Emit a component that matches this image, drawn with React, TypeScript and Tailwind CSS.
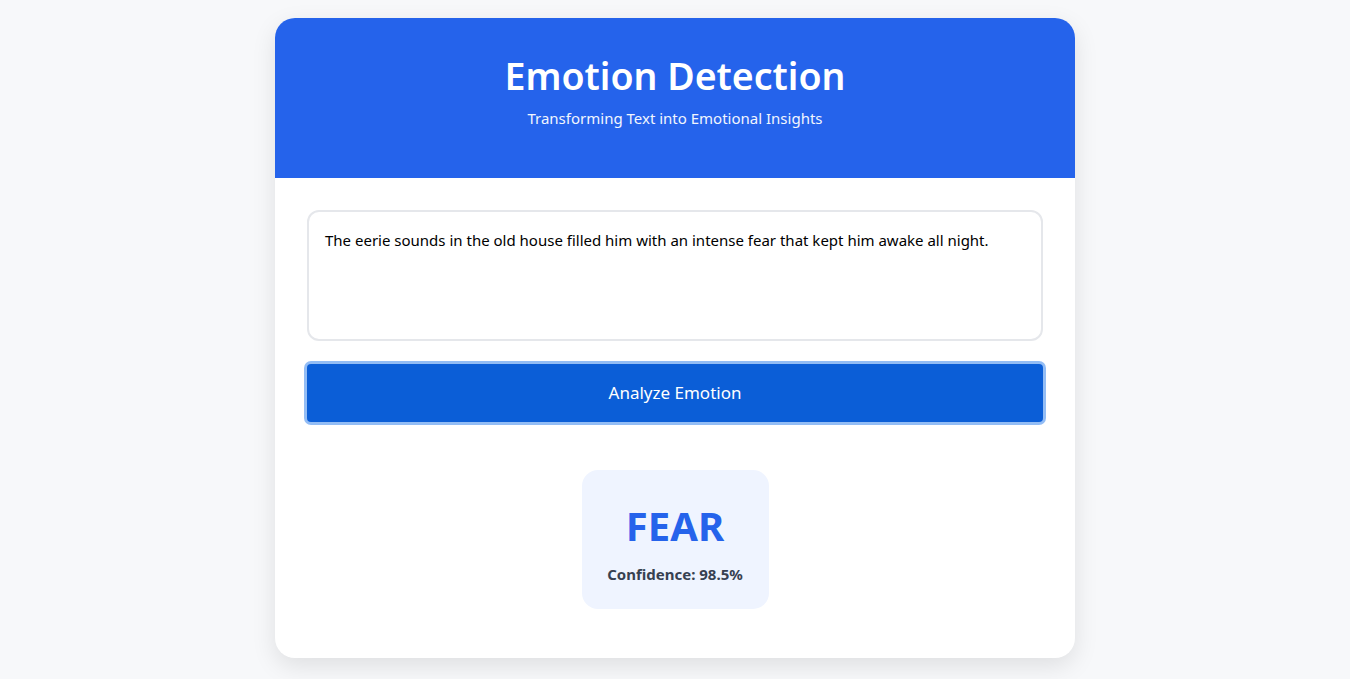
export default function App() {
  const text =
    'The eerie sounds in the old house filled him with an intense fear that kept him awake all night.';

  return (
    <div
      className="min-h-[679px] bg-[#f7f8fa] pt-[18px]"
      style={{ fontFamily: '"Segoe UI", "Noto Sans", "Open Sans", sans-serif' }}
    >
      <div className="mx-auto w-[800px] overflow-hidden rounded-[20px] bg-white shadow-[0_8px_24px_rgba(0,0,0,0.10)]">
        <header className="flex h-[160px] flex-col items-center bg-[#2563eb] pt-[33px] text-white">
          <h1 className="text-[37.5px] font-semibold leading-[50px]">Emotion Detection</h1>
          <p className="mt-[7px] text-[15px] leading-[20px] text-[#f1f5fe]">
            Transforming Text into Emotional Insights
          </p>
        </header>

        <div className="px-[32px] pb-[49px] pt-[32px]">
          <textarea
            defaultValue={text}
            className="block h-[131px] w-full resize-none rounded-[12px] border-2 border-[#e5e7eb] px-[16px] py-[17px] text-[15px] leading-[22px] text-black outline-none"
          />

          <button className="mt-[23px] block h-[58px] w-full rounded-[4px] bg-[#0b5ed7] text-[17px] text-white ring-[3px] ring-[#93bdf5]">
            Analyze Emotion
          </button>

          <div className="mt-[48px] flex justify-center">
            <div className="flex h-[139px] w-[187px] flex-col items-center rounded-[16px] bg-[#eff4ff] pt-[30px]">
              <div className="text-[40px] font-bold leading-[52px] text-[#2563eb]">FEAR</div>
              <div className="mt-[12px] text-[15px] font-bold leading-[20px] text-[#374151]">
                Confidence: 98.5%
              </div>
            </div>
          </div>
        </div>
      </div>
    </div>
  );
}
